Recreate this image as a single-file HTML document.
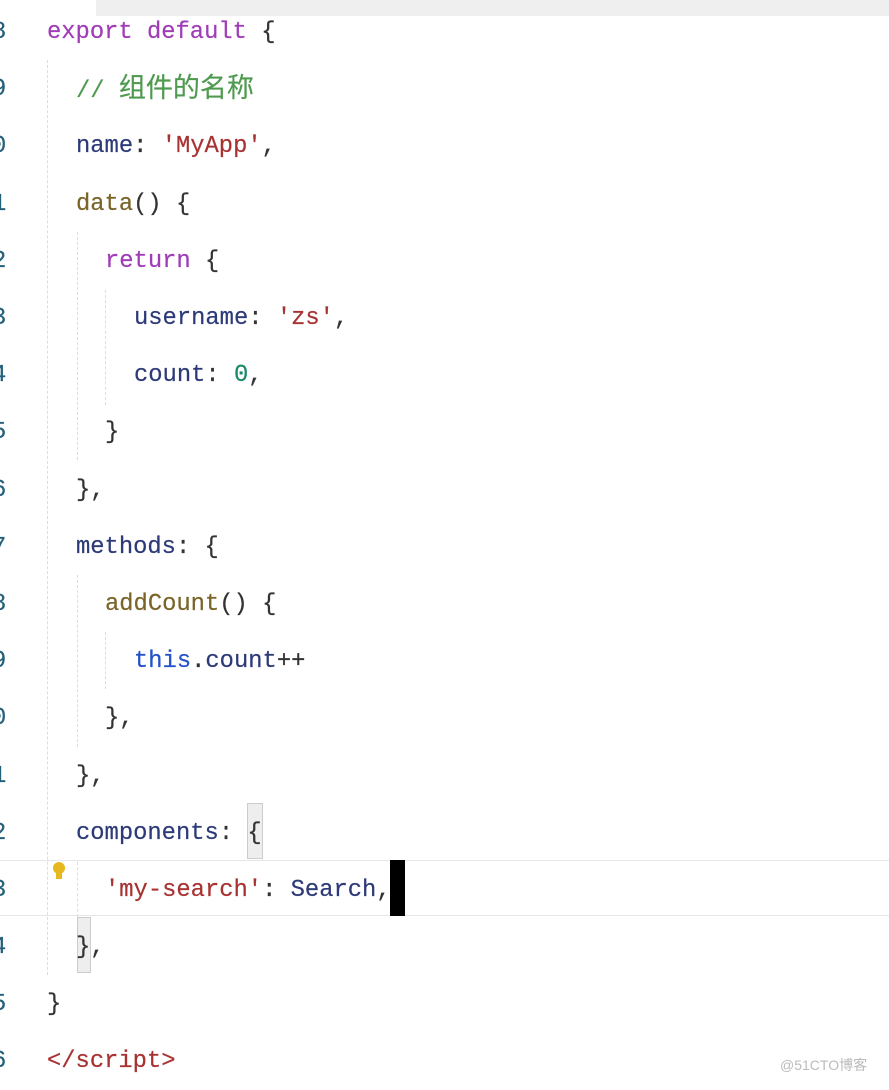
<!DOCTYPE html><html><head><meta charset="utf-8"><style>
body{margin:0;width:889px;height:1085px;background:#fff;overflow:hidden;position:relative;font-family:"Liberation Mono","Noto Sans CJK SC",monospace;font-size:23.8px;color:#333;-webkit-text-stroke:0.2px}
.l{position:absolute;left:0;height:57px;line-height:57px;white-space:pre}
.n{position:absolute;left:-8px;color:#24607a;width:20px}
.k{color:#a03cb8}.p{color:#2d3a78}.s{color:#a83232}.f{color:#7a6428}.c{color:#4f9a4f}.cj{font-family:"Noto Sans CJK SC",sans-serif;font-size:27px}.num{color:#178a6a}.t{color:#2452c8}
.g{position:absolute;width:0;border-left:1px dashed #ddd}
</style></head><body>
<div style="position:absolute;left:96px;top:0;width:793px;height:16px;background:#efefef"></div>
<div style="position:absolute;left:0;top:860px;width:889px;height:54px;border-top:1px solid #e6e6e6;border-bottom:1px solid #e6e6e6"></div>
<div style="position:absolute;left:247px;top:803px;width:14px;height:54px;background:#eee;border:1px solid #ccc"></div>
<div style="position:absolute;left:77px;top:917px;width:12px;height:54px;background:#eee;border:1px solid #ccc"></div>
<div style="position:absolute;left:390px;top:860px;width:15px;height:56px;background:#000"></div>
<div class="g" style="left:47px;top:60px;height:915px"></div>
<div class="g" style="left:77px;top:232px;height:228px"></div>
<div class="g" style="left:105px;top:290px;height:115px"></div>
<div class="g" style="left:77px;top:575px;height:172px"></div>
<div class="g" style="left:105px;top:632px;height:57px"></div>
<div class="g" style="left:77px;top:862px;height:55px"></div>
<div style="position:absolute;left:53px;top:862px;width:12px;height:12px;border-radius:50%;background:#e6b820"></div>
<div style="position:absolute;left:56px;top:872px;width:6px;height:7px;background:#e6b820"></div>
<div class="l" style="top:4px"><span class="n">8</span><span style="position:absolute;left:47px"><span class="k">export default</span> {</span></div>
<div class="l" style="top:57px"><span class="n" style="top:4px">9</span><span style="position:absolute;left:76px" class="c">// <span class="cj">组件的名称</span></span></div>
<div class="l" style="top:118px"><span class="n">0</span><span style="position:absolute;left:76px"><span class="p">name</span>: <span class="s">'MyApp'</span>,</span></div>
<div class="l" style="top:176px"><span class="n">1</span><span style="position:absolute;left:76px"><span class="f">data</span>() {</span></div>
<div class="l" style="top:233px"><span class="n">2</span><span style="position:absolute;left:105px"><span class="k">return</span> {</span></div>
<div class="l" style="top:290px"><span class="n">3</span><span style="position:absolute;left:134px"><span class="p">username</span>: <span class="s">'zs'</span>,</span></div>
<div class="l" style="top:347px"><span class="n">4</span><span style="position:absolute;left:134px"><span class="p">count</span>: <span class="num">0</span>,</span></div>
<div class="l" style="top:404px"><span class="n">5</span><span style="position:absolute;left:105px">}</span></div>
<div class="l" style="top:462px"><span class="n">6</span><span style="position:absolute;left:76px">},</span></div>
<div class="l" style="top:519px"><span class="n">7</span><span style="position:absolute;left:76px"><span class="p">methods</span>: {</span></div>
<div class="l" style="top:576px"><span class="n">8</span><span style="position:absolute;left:105px"><span class="f">addCount</span>() {</span></div>
<div class="l" style="top:633px"><span class="n">9</span><span style="position:absolute;left:134px"><span class="t">this</span>.<span class="p">count</span>++</span></div>
<div class="l" style="top:690px"><span class="n">0</span><span style="position:absolute;left:105px">},</span></div>
<div class="l" style="top:748px"><span class="n">1</span><span style="position:absolute;left:76px">},</span></div>
<div class="l" style="top:805px"><span class="n">2</span><span style="position:absolute;left:76px"><span class="p">components</span>: {</span></div>
<div class="l" style="top:862px"><span class="n">3</span><span style="position:absolute;left:105px"><span class="s">'my-search'</span>: <span class="p">Search</span>,</span></div>
<div class="l" style="top:919px"><span class="n">4</span><span style="position:absolute;left:76px">},</span></div>
<div class="l" style="top:976px"><span class="n">5</span><span style="position:absolute;left:47px">}</span></div>
<div class="l" style="top:1033px"><span class="n">6</span><span style="position:absolute;left:47px" class="s">&lt;/script&gt;</span></div>
<div style="position:absolute;left:780px;top:1055px;font-family:'Liberation Sans','Noto Sans CJK SC',sans-serif;font-size:14px;color:#bbb;-webkit-text-stroke:0">@51CTO博客</div>
</body></html>
